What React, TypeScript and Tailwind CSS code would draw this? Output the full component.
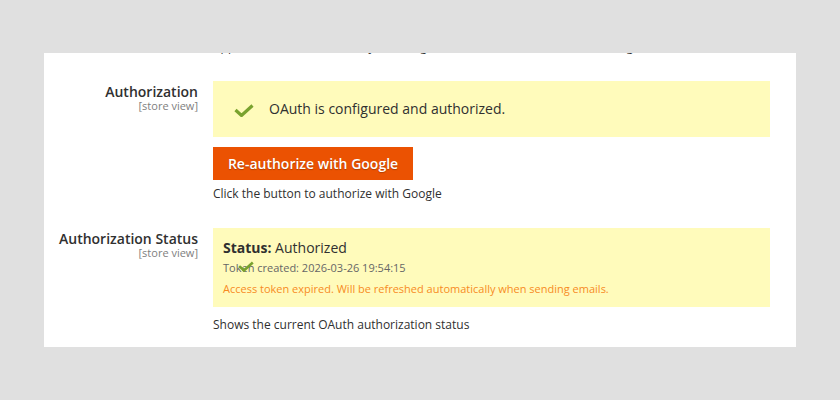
import React from "react";

const font = { fontFamily: "'Open Sans', 'Noto Sans', sans-serif" };

function Check({ className }: { className?: string }) {
  return (
    <svg viewBox="0 0 20 13" className={className} fill="none">
      <path d="M1.5 6 L7.5 11.5 L18.5 1.5" stroke="#79a22e" strokeWidth="3.2" strokeLinecap="butt" strokeLinejoin="miter" />
    </svg>
  );
}

function Label({ title }: { title: string }) {
  return (
    <div className="w-[154px] shrink-0 text-right pt-[1px]">
      <div className="text-[14px] leading-[19px] font-semibold text-[#303030]">{title}</div>
      <div className="text-[11px] leading-[9px] text-[#808080]">[store view]</div>
    </div>
  );
}

export default function App() {
  return (
    <div className="w-[840px] h-[400px] bg-[#e0e0e0] pt-[53px]" style={font}>
      <div className="ml-[44px] w-[752px] h-[294px] bg-white overflow-hidden">
        <div className="pl-[169px] -mt-[15px] text-[12px] leading-[18px] text-[#303030] whitespace-nowrap">
          Application name shown to your Google users at the consent screen during authorization.
        </div>

        <div className="flex gap-[15px] mt-[25px]">
          <Label title="Authorization" />
          <div className="w-[557px]">
            <div className="h-[56px] bg-[#fffbbb] pl-[21px] pt-[18px] flex items-start">
              <Check className="w-[20px] h-[13px] mt-[5px] shrink-0" />
              <span className="ml-[15px] text-[14px] leading-[19px] text-[#303030]">
                OAuth is configured and authorized.
              </span>
            </div>
            <button className="mt-[10px] h-[33px] w-[200px] bg-[#eb5202] text-white text-[14px] font-semibold leading-[20px] pt-[1px] flex items-center justify-center [text-shadow:0_1px_1px_rgba(0,0,0,0.25)]">
              Re-authorize with Google
            </button>
            <div className="mt-[5px] text-[12px] leading-[18px] text-[#303030]">
              Click the button to authorize with Google
            </div>
          </div>
        </div>

        <div className="flex gap-[15px] mt-[25px]">
          <Label title="Authorization Status" />
          <div className="w-[557px]">
            <div className="relative bg-[#fffbbb] pl-[10px] pt-[10px] pb-[8px]">
              <div className="text-[14px] leading-[20px] text-[#303030]">
                <span className="font-bold">Status:</span> Authorized
              </div>
              <div className="text-[11px] leading-[20px] text-[#666666]">
                Token created: 2026-03-26 19:54:15
              </div>
              <div className="text-[11px] leading-[21px] text-[#f78b1f]">
                Access token expired. Will be refreshed automatically when sending emails.
              </div>
              <Check className="absolute left-[25px] top-[33px] w-[16px] h-[11px]" />
            </div>
            <div className="mt-[9px] text-[12px] leading-[18px] text-[#303030]">
              Shows the current OAuth authorization status
            </div>
          </div>
        </div>
      </div>
    </div>
  );
}
